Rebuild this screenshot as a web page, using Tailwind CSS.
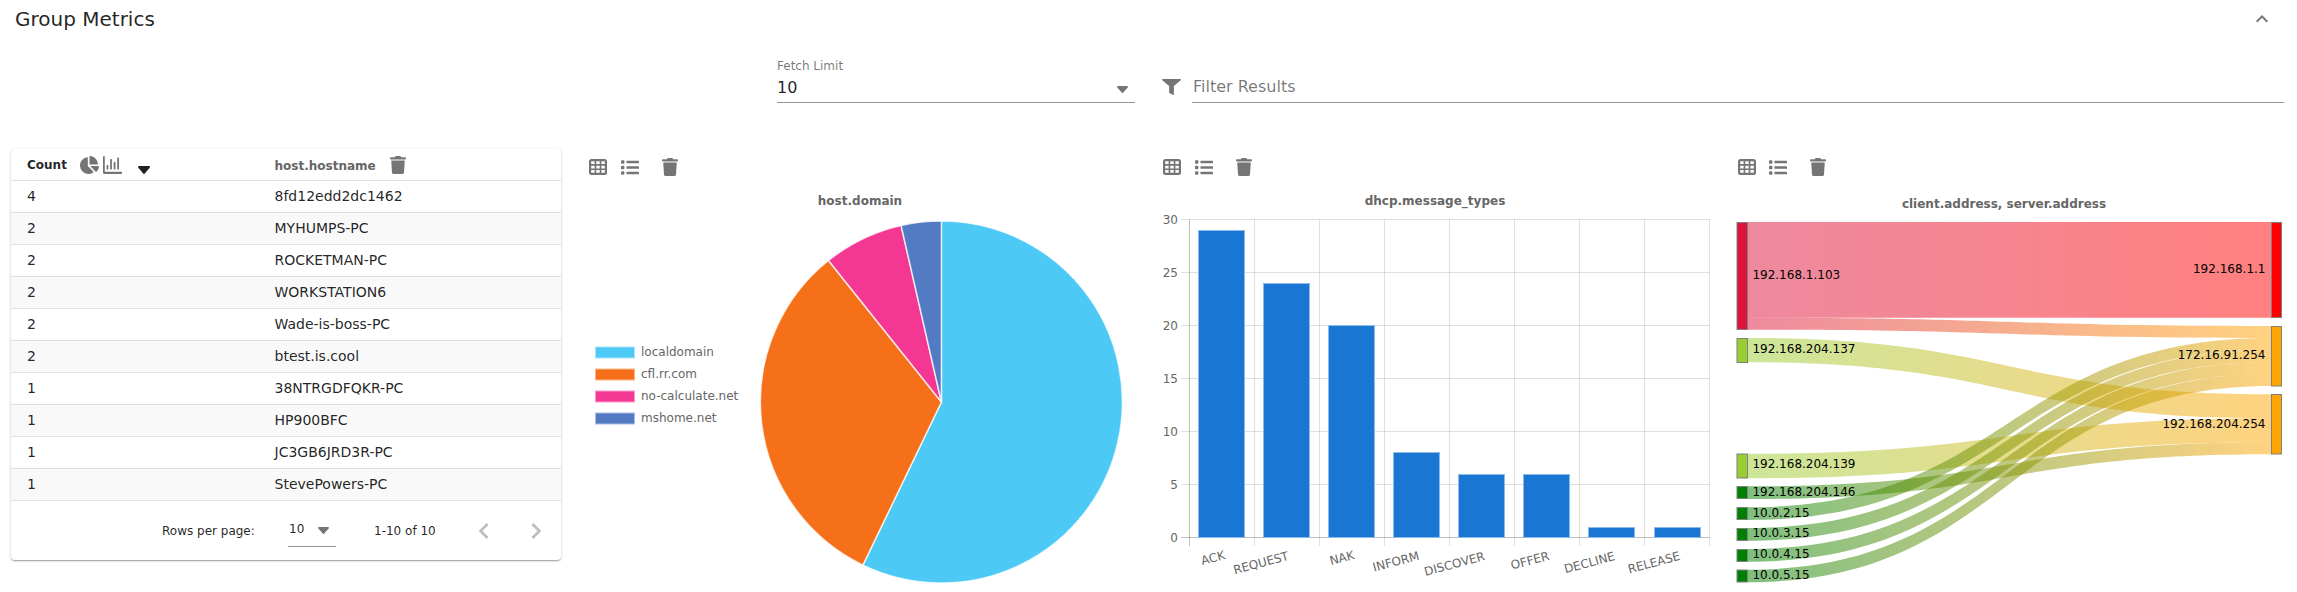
<!doctype html>
<html>
<head>
<meta charset="utf-8">
<script src="https://cdn.jsdelivr.net/npm/@tailwindcss/browser@4"></script>
</head>
<body class="w-[2297px] h-[592px] overflow-hidden bg-white font-['DejaVu_Sans',sans-serif] text-black/87">
<header class="flex items-center justify-between h-[38px] pl-[15px] pr-[23px]">
  <h1 class="text-[20px] leading-[38px] font-normal">Group Metrics</h1>
  <svg class="w-[24px] h-[24px] fill-[#757575]" viewBox="0 0 24 24"><path d="M12 8l-6 6 1.41 1.41L12 10.83l4.59 4.58L18 14z"/></svg>
</header>
<section class="flex h-[111px] pl-[777px] pr-[13px]">
  <div class="w-[358px] h-[66px] pt-[20px]">
    <div class="text-[12px] leading-[16px] text-black/54">Fetch Limit</div>
    <div class="flex items-center justify-between h-[29px] border-b border-black/42 text-[16px] pr-[7px]">
      <span>10</span>
      <svg class="w-[11px] h-[7px] mt-[3px] fill-[#757575]" viewBox="10 190 300 170" preserveAspectRatio="none"><path d="M31.3 192h257.3c17.8 0 26.7 21.5 14.1 34.1L174.1 354.8c-7.8 7.8-20.5 7.8-28.3 0L17.2 226.1C4.6 213.5 13.5 192 31.3 192z"/></svg>
    </div>
  </div>
  <div class="flex flex-1 ml-[27px] h-[66px] pt-[36px]">
    <svg class="w-[19px] h-[16px] mt-[5px] fill-[#757575]" viewBox="0 0 512 512" preserveAspectRatio="none"><path d="M487.976 0H24.028C2.71 0-8.047 25.866 7.058 40.971L192 225.941V432c0 7.831 3.821 15.17 10.237 19.662l80 55.98C298.02 518.69 320 507.493 320 487.98V225.941l184.947-184.97C520.021 25.896 509.338 0 487.976 0z"/></svg>
    <div class="flex-1 ml-[11px] h-[29px] border-b border-black/42 pl-[1px] text-[16px] leading-[25px] text-black/54">Filter Results</div>
  </div>
</section>
<main class="grid grid-cols-[574px_574px_574px_575px] items-start">
  <!-- table -->
  <div class="ml-[11px] mr-[13px] h-[411px] rounded-[4px] bg-white shadow-[0_1px_3px_0_rgba(0,0,0,0.2),0_1px_1px_0_rgba(0,0,0,0.14),0_2px_1px_-1px_rgba(0,0,0,0.12)]">
    <div class="grid grid-cols-[263.5px_1fr] h-[32px] border-b border-[#e0e0e0] text-[12px] font-bold">
      <div class="flex items-center pl-[16px]">
        <span class="w-[53px]">Count</span>
        <svg class="w-[19px] h-[18px] fill-[#757575]" viewBox="0 0 544 512"><path d="M527.79 288H290.5l158.03 158.03c6.04 6.04 15.98 6.53 22.19.68 38.7-36.46 65.32-85.61 72.13-140.92 1.11-9.01-5.6-17.79-15.06-17.79zm-15.83-64.8C503.72 103.74 408.26 8.28 288.8.04 279.68-.59 272 7.1 272 16.24V240h223.77c9.14 0 16.82-7.68 16.19-16.8zM224 288V50.71c0-9.55-8.31-17.03-17.77-15.7C86.99 51.49-4.1 155.6.14 280.37 4.5 408.51 114.83 513.59 243.03 511.98c50.4-.63 96.97-16.87 135.26-44.03 7.9-5.6 8.42-17.23 1.57-24.08L224 288z"/></svg>
        <svg class="w-[19px] h-[18px] ml-[4px] fill-[#757575]" viewBox="0 64 512 384" preserveAspectRatio="none"><path d="M396.8 352h22.4c6.4 0 12.8-6.4 12.8-12.8V108.8c0-6.4-6.4-12.8-12.8-12.8h-22.4c-6.4 0-12.8 6.4-12.8 12.8v230.4c0 6.4 6.4 12.8 12.8 12.8zm-192 0h22.4c6.4 0 12.8-6.4 12.8-12.8V140.8c0-6.4-6.4-12.8-12.8-12.8h-22.4c-6.4 0-12.8 6.4-12.8 12.8v198.4c0 6.4 6.4 12.8 12.8 12.8zm96 0h22.4c6.4 0 12.8-6.4 12.8-12.8V204.8c0-6.4-6.4-12.8-12.8-12.8h-22.4c-6.4 0-12.8 6.4-12.8 12.8v134.4c0 6.4 6.4 12.8 12.8 12.8zM496 400H48V80c0-8.84-7.16-16-16-16H16C7.16 64 0 71.16 0 80v336c0 17.67 14.33 32 32 32h464c8.84 0 16-7.16 16-16v-16c0-8.84-7.16-16-16-16zm-387.2-48h22.4c6.4 0 12.8-6.4 12.8-12.8v-70.4c0-6.4-6.4-12.8-12.8-12.8h-22.4c-6.4 0-12.8 6.4-12.8 12.8v70.4c0 6.4 6.4 12.8 12.8 12.8z"/></svg>
        <svg class="w-[12px] h-[8px] ml-[16px] mt-[10px] fill-[#202020]" viewBox="10 190 300 170" preserveAspectRatio="none"><path d="M31.3 192h257.3c17.8 0 26.7 21.5 14.1 34.1L174.1 354.8c-7.8 7.8-20.5 7.8-28.3 0L17.2 226.1C4.6 213.5 13.5 192 31.3 192z"/></svg>
      </div>
      <div class="flex items-center text-[#666]">
        <span class="w-[115px] pt-[2px]">host.hostname</span>
        <svg class="w-[16px] h-[18px] fill-[#757575]" viewBox="0 0 448 512"><path d="M432 32H312l-9.4-18.7A24 24 0 0 0 281.1 0H166.8a23.72 23.72 0 0 0-21.4 13.3L136 32H16A16 16 0 0 0 0 48v32a16 16 0 0 0 16 16h416a16 16 0 0 0 16-16V48a16 16 0 0 0-16-16zM53.2 467a48 48 0 0 0 47.9 45h245.8a48 48 0 0 0 47.9-45L416 128H32z"/></svg>
      </div>
    </div>
    <div class="text-[14px]">
      <div class="grid grid-cols-[263.5px_1fr] items-center h-[32px] border-b border-[#e0e0e0]"><span class="pl-[16px]">4</span><span>8fd12edd2dc1462</span></div>
      <div class="grid grid-cols-[263.5px_1fr] items-center h-[32px] border-b border-[#e0e0e0] bg-[#f9f9f9]"><span class="pl-[16px]">2</span><span>MYHUMPS-PC</span></div>
      <div class="grid grid-cols-[263.5px_1fr] items-center h-[32px] border-b border-[#e0e0e0]"><span class="pl-[16px]">2</span><span>ROCKETMAN-PC</span></div>
      <div class="grid grid-cols-[263.5px_1fr] items-center h-[32px] border-b border-[#e0e0e0] bg-[#f9f9f9]"><span class="pl-[16px]">2</span><span>WORKSTATION6</span></div>
      <div class="grid grid-cols-[263.5px_1fr] items-center h-[32px] border-b border-[#e0e0e0]"><span class="pl-[16px]">2</span><span>Wade-is-boss-PC</span></div>
      <div class="grid grid-cols-[263.5px_1fr] items-center h-[32px] border-b border-[#e0e0e0] bg-[#f9f9f9]"><span class="pl-[16px]">2</span><span>btest.is.cool</span></div>
      <div class="grid grid-cols-[263.5px_1fr] items-center h-[32px] border-b border-[#e0e0e0]"><span class="pl-[16px]">1</span><span>38NTRGDFQKR-PC</span></div>
      <div class="grid grid-cols-[263.5px_1fr] items-center h-[32px] border-b border-[#e0e0e0] bg-[#f9f9f9]"><span class="pl-[16px]">1</span><span>HP900BFC</span></div>
      <div class="grid grid-cols-[263.5px_1fr] items-center h-[32px] border-b border-[#e0e0e0]"><span class="pl-[16px]">1</span><span>JC3GB6JRD3R-PC</span></div>
      <div class="grid grid-cols-[263.5px_1fr] items-center h-[32px] border-b border-[#e0e0e0] bg-[#f9f9f9]"><span class="pl-[16px]">1</span><span>StevePowers-PC</span></div>
    </div>
    <div class="flex items-center h-[59px] pl-[151px] text-[12px]">
      <span class="w-[126px]">Rows per page:</span>
      <div class="flex items-center justify-between w-[48px] h-[32px] border-b border-black/42 pl-[1px] pb-[2px]">
        <span>10</span>
        <svg class="w-[11px] h-[7px] mt-[2px] mr-[7px] fill-[#757575]" viewBox="10 190 300 170" preserveAspectRatio="none"><path d="M31.3 192h257.3c17.8 0 26.7 21.5 14.1 34.1L174.1 354.8c-7.8 7.8-20.5 7.8-28.3 0L17.2 226.1C4.6 213.5 13.5 192 31.3 192z"/></svg>
      </div>
      <span class="w-[94px] ml-[38px]">1-10 of 10</span>
      <svg class="w-[32px] h-[32px] fill-black/26" viewBox="0 0 24 24"><path d="M15.41 7.41 14 6l-6 6 6 6 1.41-1.41L10.83 12z"/></svg>
      <svg class="w-[32px] h-[32px] ml-[20px] fill-black/26" viewBox="0 0 24 24"><path d="M8.59 16.59 10 18l6-6-6-6-1.41 1.41L13.17 12z"/></svg>
    </div>
  </div>

  <!-- pie -->
  <div>
    <div class="flex items-center h-[41px] pl-[15px] pb-[5px]">
      <svg class="w-[18px] h-[16px] fill-[#757575]" viewBox="0 0 18 16"><path fill-rule="evenodd" d="M2.5 0h13A2.5 2.5 0 0 1 18 2.5v11a2.5 2.5 0 0 1-2.5 2.500h-13A2.5 2.5 0 0 1 0 13.500v-11A2.500 2.500 0 0 1 2.500 0zM2.200 2.300v2.700h3.400v-2.700zm5.100 0v2.700h3.400v-2.700zm5.100 0v2.700h3.400v-2.700zM2.200 6.700v2.700h3.400v-2.700zm5.100 0v2.700h3.400v-2.700zm5.100 0v2.700h3.400v-2.700zM2.200 11v2.700h3.400V11zm5.100 0v2.700h3.400V11zm5.100 0v2.700h3.400V11z"/></svg>
      <svg class="w-[18px] h-[15px] ml-[14px] fill-[#757575]" viewBox="0 0 18 15"><rect x="0" y=".3" width="3.400" height="3.400" rx="1"/><rect x="0" y="5.800" width="3.400" height="3.400" rx="1"/><rect x="0" y="11.300" width="3.400" height="3.400" rx="1"/><rect x="5.500" y=".7" width="12.500" height="2.600" rx=".5"/><rect x="5.500" y="6.200" width="12.500" height="2.600" rx=".5"/><rect x="5.500" y="11.700" width="12.500" height="2.600" rx=".5"/></svg>
      <svg class="w-[16px] h-[18px] ml-[23px] fill-[#757575]" viewBox="0 0 448 512"><path d="M432 32H312l-9.4-18.7A24 24 0 0 0 281.1 0H166.8a23.72 23.72 0 0 0-21.4 13.3L136 32H16A16 16 0 0 0 0 48v32a16 16 0 0 0 16 16h416a16 16 0 0 0 16-16V48a16 16 0 0 0-16-16zM53.2 467a48 48 0 0 0 47.9 45h245.8a48 48 0 0 0 47.9-45L416 128H32z"/></svg>
    </div>
    <svg class="block" width="574" height="402" viewBox="0 0 574 402">
      <text x="286" y="15" text-anchor="middle" font-size="12" font-weight="700" fill="#666">host.domain</text>
      <g stroke="#fff" stroke-opacity=".75" stroke-width="1.500">
        <path fill="#4dc9f6" d="M367.400 212V31A181 181 0 1 1 288.900 375.100Z"/>
        <path fill="#f67019" d="M367.400 212L288.900 375.100A181 181 0 0 1 254.500 70.500Z"/>
        <path fill="#f53794" d="M367.400 212L254.500 70.500A181 181 0 0 1 327.100 35.500Z"/>
        <path fill="#537bc4" d="M367.400 212L327.100 35.500A181 181 0 0 1 367.400 31Z"/>
      </g>
      <g stroke-width="1" font-size="12" fill="#666">
        <rect x="21.500" y="157" width="39" height="11" fill="#4dc9f6" stroke="#a6e4fa"/>
        <rect x="21.500" y="179" width="39" height="11" fill="#f67019" stroke="#fbb78c"/>
        <rect x="21.500" y="201" width="39" height="11" fill="#f53794" stroke="#fa9bc9"/>
        <rect x="21.500" y="223" width="39" height="11" fill="#537bc4" stroke="#a9bde1"/>
        <text x="67" y="165.500">localdomain</text>
        <text x="67" y="187.500">cfl.rr.com</text>
        <text x="67" y="209.500">no-calculate.net</text>
        <text x="67" y="231.500">mshome.net</text>
      </g>
    </svg>
  </div>

  <!-- bar -->
  <div>
    <div class="flex items-center h-[41px] pl-[15px] pb-[5px]">
      <svg class="w-[18px] h-[16px] fill-[#757575]" viewBox="0 0 18 16"><path fill-rule="evenodd" d="M2.5 0h13A2.5 2.5 0 0 1 18 2.5v11a2.5 2.5 0 0 1-2.5 2.500h-13A2.5 2.5 0 0 1 0 13.500v-11A2.500 2.500 0 0 1 2.500 0zM2.200 2.300v2.700h3.400v-2.700zm5.100 0v2.700h3.400v-2.700zm5.100 0v2.700h3.400v-2.700zM2.200 6.700v2.700h3.400v-2.700zm5.100 0v2.700h3.400v-2.700zm5.100 0v2.700h3.400v-2.700zM2.200 11v2.700h3.400V11zm5.100 0v2.700h3.400V11zm5.100 0v2.700h3.400V11z"/></svg>
      <svg class="w-[18px] h-[15px] ml-[14px] fill-[#757575]" viewBox="0 0 18 15"><rect x="0" y=".3" width="3.400" height="3.400" rx="1"/><rect x="0" y="5.800" width="3.400" height="3.400" rx="1"/><rect x="0" y="11.300" width="3.400" height="3.400" rx="1"/><rect x="5.500" y=".7" width="12.500" height="2.600" rx=".5"/><rect x="5.500" y="6.200" width="12.500" height="2.600" rx=".5"/><rect x="5.500" y="11.700" width="12.500" height="2.600" rx=".5"/></svg>
      <svg class="w-[16px] h-[18px] ml-[23px] fill-[#757575]" viewBox="0 0 448 512"><path d="M432 32H312l-9.4-18.7A24 24 0 0 0 281.1 0H166.8a23.72 23.72 0 0 0-21.4 13.3L136 32H16A16 16 0 0 0 0 48v32a16 16 0 0 0 16 16h416a16 16 0 0 0 16-16V48a16 16 0 0 0-16-16zM53.2 467a48 48 0 0 0 47.9 45h245.8a48 48 0 0 0 47.9-45L416 128H32z"/></svg>
    </div>
    <svg class="block" width="574" height="402" viewBox="0 0 574 402">
      <text x="287" y="15" text-anchor="middle" font-size="12" font-weight="700" fill="#666">dhcp.message_types</text>
      <g stroke="#000" stroke-opacity=".12" stroke-width="1">
        <path d="M33 29.500H562M33 82.500H562M33 135.500H562M33 188.500H562M33 241.500H562M33 294.500H562"/>
        <path d="M106.500 29.500V356M171.500 29.500V356M236.500 29.500V356M301.500 29.500V356M366.500 29.500V356M431.500 29.500V356M496.500 29.500V356M561.500 29.500V356"/>
      </g>
      <g stroke="#000" stroke-opacity=".25" stroke-width="1"><path d="M41.500 29.500V356M33 347.500H562"/></g>
      <g fill="#1976d2" stroke="#8cbbe9" stroke-width="1">
        <rect x="50.500" y="40.500" width="46" height="307"/>
        <rect x="115.500" y="93.500" width="46" height="254"/>
        <rect x="180.500" y="135.500" width="46" height="212"/>
        <rect x="245.500" y="262.500" width="46" height="85"/>
        <rect x="310.500" y="284.500" width="46" height="63"/>
        <rect x="375.500" y="284.500" width="46" height="63"/>
        <rect x="440.500" y="337.500" width="46" height="10"/>
        <rect x="506.500" y="337.500" width="46" height="10"/>
      </g>
      <g font-size="12" fill="#666" text-anchor="end">
        <text x="30" y="34">30</text><text x="30" y="87">25</text><text x="30" y="140">20</text><text x="30" y="193">15</text><text x="30" y="246">10</text><text x="30" y="299">5</text><text x="30" y="352">0</text>
      </g>
      <g font-size="12" fill="#666" text-anchor="middle" dominant-baseline="central">
        <text x="65" y="368" transform="rotate(-15 65 368)">ACK</text>
        <text x="113" y="373" transform="rotate(-15 113 373)">REQUEST</text>
        <text x="194" y="368" transform="rotate(-15 194 368)">NAK</text>
        <text x="248" y="371.600" transform="rotate(-15 248 371.600)">INFORM</text>
        <text x="306.500" y="374" transform="rotate(-15 306.500 374)">DISCOVER</text>
        <text x="382" y="370.700" transform="rotate(-15 382 370.700)">OFFER</text>
        <text x="441.500" y="372.700" transform="rotate(-15 441.500 372.700)">DECLINE</text>
        <text x="506" y="372.700" transform="rotate(-15 506 372.700)">RELEASE</text>
      </g>
    </svg>
  </div>

  <!-- sankey -->
  <div>
    <div class="flex items-center h-[41px] pl-[16px] pb-[5px]">
      <svg class="w-[18px] h-[16px] fill-[#757575]" viewBox="0 0 18 16"><path fill-rule="evenodd" d="M2.5 0h13A2.5 2.5 0 0 1 18 2.5v11a2.5 2.5 0 0 1-2.5 2.500h-13A2.5 2.5 0 0 1 0 13.500v-11A2.500 2.500 0 0 1 2.500 0zM2.200 2.300v2.700h3.400v-2.700zm5.100 0v2.700h3.400v-2.700zm5.100 0v2.700h3.400v-2.700zM2.200 6.700v2.700h3.400v-2.700zm5.100 0v2.700h3.400v-2.700zm5.100 0v2.700h3.400v-2.700zM2.200 11v2.700h3.400V11zm5.100 0v2.700h3.400V11zm5.100 0v2.700h3.400V11z"/></svg>
      <svg class="w-[18px] h-[15px] ml-[13px] fill-[#757575]" viewBox="0 0 18 15"><rect x="0" y=".3" width="3.400" height="3.400" rx="1"/><rect x="0" y="5.800" width="3.400" height="3.400" rx="1"/><rect x="0" y="11.300" width="3.400" height="3.400" rx="1"/><rect x="5.500" y=".7" width="12.500" height="2.600" rx=".5"/><rect x="5.500" y="6.200" width="12.500" height="2.600" rx=".5"/><rect x="5.500" y="11.700" width="12.500" height="2.600" rx=".5"/></svg>
      <svg class="w-[16px] h-[18px] ml-[23px] fill-[#757575]" viewBox="0 0 448 512"><path d="M432 32H312l-9.4-18.7A24 24 0 0 0 281.1 0H166.8a23.72 23.72 0 0 0-21.4 13.3L136 32H16A16 16 0 0 0 0 48v32a16 16 0 0 0 16 16h416a16 16 0 0 0 16-16V48a16 16 0 0 0-16-16zM53.2 467a48 48 0 0 0 47.9 45h245.8a48 48 0 0 0 47.9-45L416 128H32z"/></svg>
    </div>
    <svg class="block" width="575" height="402" viewBox="0 0 575 402">
      <defs>
        <linearGradient id="cr" gradientUnits="userSpaceOnUse" x1="25.600" x2="549" y1="0" y2="0"><stop offset="0" stop-color="#dc143c" stop-opacity=".5"/><stop offset="1" stop-color="#ff0000" stop-opacity=".5"/></linearGradient>
        <linearGradient id="co" gradientUnits="userSpaceOnUse" x1="25.600" x2="549" y1="0" y2="0"><stop offset="0" stop-color="#dc143c" stop-opacity=".5"/><stop offset="1" stop-color="#ffa500" stop-opacity=".5"/></linearGradient>
        <linearGradient id="yo" gradientUnits="userSpaceOnUse" x1="25.600" x2="549" y1="0" y2="0"><stop offset="0" stop-color="#9acd32" stop-opacity=".5"/><stop offset="1" stop-color="#ffa500" stop-opacity=".5"/></linearGradient>
        <linearGradient id="go" gradientUnits="userSpaceOnUse" x1="25.600" x2="549" y1="0" y2="0"><stop offset="0" stop-color="#008000" stop-opacity=".5"/><stop offset="1" stop-color="#ffa500" stop-opacity=".5"/></linearGradient>
      </defs>
      <text x="282" y="18" text-anchor="middle" font-size="12" font-weight="700" fill="#666">client.address, server.address</text>
      <path fill="url(#cr)" d="M25.600 32H549V127.700H25.600Z"/>
      <path fill="url(#co)" d="M25.600 127.700C287 127.700 287 136 549 136V148C287 148 287 139.700 25.600 139.700Z"/>
      <path fill="url(#yo)" d="M25.600 148C287 148 287 204.300 549 204.300V228.300C287 228.300 287 172.300 25.600 172.300Z"/>
      <path fill="url(#yo)" d="M25.600 263.700C287 263.700 287 228.300 549 228.300V252.300C287 252.300 287 288.300 25.600 288.300Z"/>
      <path fill="url(#go)" d="M25.600 296.300C287 296.300 287 252.300 549 252.300V264.300C287 264.300 287 309 25.600 309Z"/>
      <path fill="url(#go)" d="M25.600 317.300C287 317.300 287 148 549 148V160C287 160 287 330 25.600 330Z"/>
      <path fill="url(#go)" d="M25.600 338C287 338 287 160 549 160V172C287 172 287 350.700 25.600 350.700Z"/>
      <path fill="url(#go)" d="M25.600 359C287 359 287 172 549 172V184C287 184 287 371.700 25.600 371.700Z"/>
      <path fill="url(#go)" d="M25.600 379.700C287 379.700 287 184 549 184V196C287 196 287 392.300 25.600 392.300Z"/>
      <g stroke="#808080" stroke-width="1">
        <rect x="15" y="32.500" width="10.500" height="107" fill="#dc143c"/>
        <rect x="15" y="148.500" width="10.500" height="24" fill="#9acd32"/>
        <rect x="15" y="264" width="10.500" height="24" fill="#9acd32"/>
        <rect x="15" y="296.500" width="10.500" height="12" fill="#008000"/>
        <rect x="15" y="317.500" width="10.500" height="12" fill="#008000"/>
        <rect x="15" y="338.500" width="10.500" height="12" fill="#008000"/>
        <rect x="15" y="359.500" width="10.500" height="12" fill="#008000"/>
        <rect x="15" y="380" width="10.500" height="12" fill="#008000"/>
        <rect x="549.500" y="32.500" width="10" height="95" fill="#ff0000"/>
        <rect x="549.500" y="136.500" width="10" height="59.500" fill="#ffa500"/>
        <rect x="549.500" y="204.500" width="10" height="59.500" fill="#ffa500"/>
      </g>
      <g font-size="12" fill="#000" dominant-baseline="central">
        <text x="30.400" y="84.700">192.168.1.103</text>
        <text x="30.400" y="158.700">192.168.204.137</text>
        <text x="30.400" y="274.300">192.168.204.139</text>
        <text x="30.400" y="301.700">192.168.204.146</text>
        <text x="30.400" y="322.700">10.0.2.15</text>
        <text x="30.400" y="343.300">10.0.3.15</text>
        <text x="30.400" y="363.700">10.0.4.15</text>
        <text x="30.400" y="384.700">10.0.5.15</text>
      </g>
      <g font-size="12" fill="#000" dominant-baseline="central" text-anchor="end">
        <text x="543.500" y="78.700">192.168.1.1</text>
        <text x="543.500" y="164.700">172.16.91.254</text>
        <text x="543.500" y="233.700">192.168.204.254</text>
      </g>
    </svg>
  </div>
</main>
</body>
</html>
